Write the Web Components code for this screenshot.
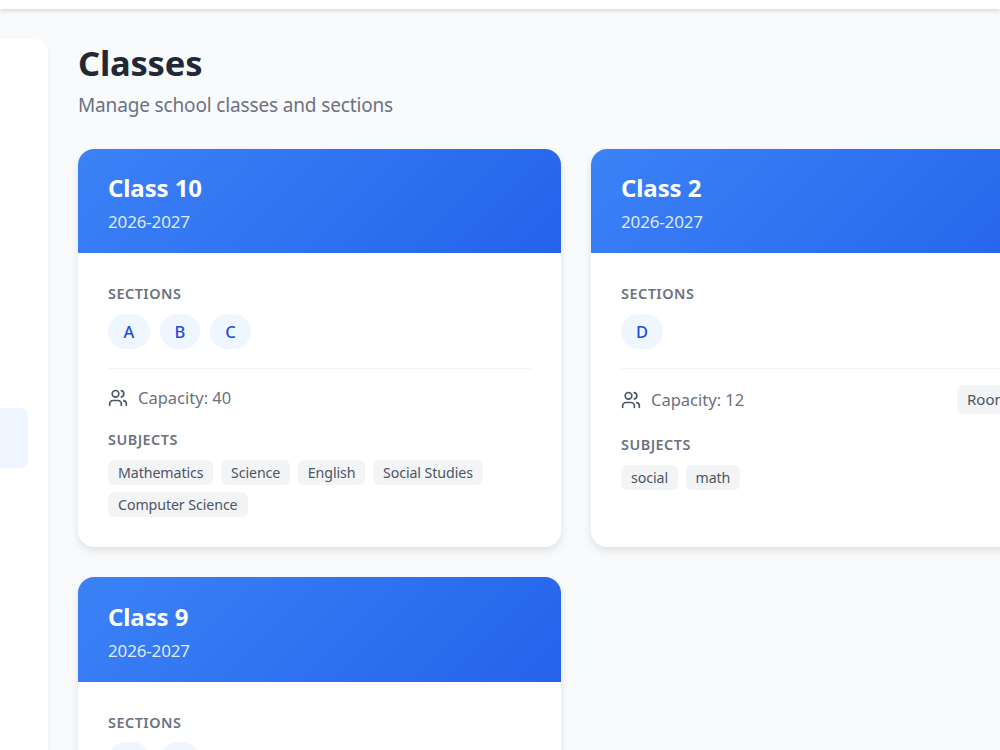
<!DOCTYPE html>
<html lang="en"><head><meta charset="utf-8"><title>Classes</title>
<style>
html,body{margin:0;height:750px;overflow:hidden}
body{font-family:"Noto Sans","Open Sans","Liberation Sans",sans-serif;background:#f9fafb;color:#1f2937}
</style></head><body>
<app-shell>
  <class-grid>
    <class-card name="Class 10" year="2026-2027" capacity="40">
      <section-pill slot="sections" style="--w:42px">A</section-pill><section-pill slot="sections" style="--w:40px">B</section-pill><section-pill slot="sections" style="--w:41px">C</section-pill>
      <subject-tag slot="subjects">Mathematics</subject-tag><subject-tag slot="subjects">Science</subject-tag><subject-tag slot="subjects">English</subject-tag><subject-tag slot="subjects">Social Studies</subject-tag><subject-tag slot="subjects">Computer Science</subject-tag>
    </class-card>
    <class-card name="Class 2" year="2026-2027" capacity="12" room="Room 101">
      <section-pill slot="sections" style="--w:42px">D</section-pill>
      <subject-tag slot="subjects">social</subject-tag><subject-tag slot="subjects">math</subject-tag>
    </class-card>
    <class-card name="Class 9" year="2026-2027">
      <section-pill slot="sections" style="--w:42px"></section-pill><section-pill slot="sections" style="--w:40px"></section-pill>
    </class-card>
  </class-grid>
</app-shell>
<script>
const def=(name,html,init)=>customElements.define(name,class extends HTMLElement{
  constructor(){super();this.attachShadow({mode:'open'}).innerHTML=html;}
  connectedCallback(){init&&init(this.shadowRoot,this);}
});
def('app-shell',`<style>
:host{display:flex;flex-direction:column;height:750px;overflow:hidden}
.top{flex:none;height:9px;background:#fff;box-shadow:0 2px 4px rgba(0,0,0,.14);position:relative;z-index:2}
.row{flex:1;display:flex;min-height:0}
.side{flex:none;width:48px;box-sizing:border-box;margin-top:30px;padding-top:369px;background:#fff;border-radius:0 12px 12px 0;box-shadow:0 4px 6px rgba(0,0,0,.06);height:800px}
.active{width:28px;height:60px;background:#eff6ff;border-radius:0 8px 8px 0}
main{flex:none;width:1200px;padding:30px 30px 0;box-sizing:border-box}
h1{margin:0;font-size:34.5px;line-height:48px;font-weight:700;color:#1f2937;letter-spacing:-.2px}
p{margin:5px 0 31.2px;font-size:19px;line-height:26px;color:#6b7280;letter-spacing:-.15px}
</style>
<div class="top"></div>
<div class="row"><div class="side"><div class="active"></div></div>
<main><h1>Classes</h1><p>Manage school classes and sections</p><slot></slot></main></div>`);
def('class-grid',`<style>:host{display:grid;grid-template-columns:483px 483px;gap:30px}</style><slot></slot>`);
def('class-card',`<style>
:host{display:block;background:#fff;border-radius:16px;box-shadow:0 4px 8px rgba(0,0,0,.1);overflow:hidden}
header{height:104.2px;box-sizing:border-box;padding:21.2px 30px 0;background:linear-gradient(135deg,#3b82f6,#2563eb);color:#fff}
h2{margin:0;font-size:24px;line-height:36px;font-weight:700;letter-spacing:-.1px}
.y{margin-top:3px;font-size:17px;line-height:26px;color:rgba(255,255,255,.85);letter-spacing:-.15px}
.b{padding:30px 30px 30.8px}
.l{font-size:14.4px;line-height:22.6px;font-weight:600;letter-spacing:.5px;text-transform:uppercase;color:#6b7280;margin-bottom:8px}
.s{display:flex;gap:10px;padding-bottom:19px;border-bottom:1px solid #f3f4f6;margin-bottom:16px}
.m{display:flex;justify-content:space-between;align-items:center;margin-bottom:20px;color:#4b5563}
.c{display:flex;align-items:center;gap:10px;box-sizing:border-box;height:24px;padding-top:2px;font-size:16.5px;line-height:22px;color:#6b7280}
svg{width:20px;height:20px;flex:none;fill:none;stroke:#4b5563;stroke-width:2;stroke-linecap:round;stroke-linejoin:round}
.r{width:87px;padding:0 10px;height:29px;line-height:29px;box-sizing:border-box;background:#f3f4f6;border-radius:6px;font-size:15px;color:#4b5563;white-space:nowrap}
.t{display:flex;flex-wrap:wrap;gap:7px 7.5px}
</style>
<header><h2 id="n"></h2><div class="y" id="y"></div></header>
<div class="b">
<div class="l">Sections</div><div class="s"><slot name="sections"></slot></div>
<div class="m" id="m"><div class="c"><svg viewBox="0 0 24 24"><path d="M16 21v-2a4 4 0 0 0-4-4H6a4 4 0 0 0-4 4v2"/><circle cx="9" cy="7" r="4"/><path d="M22 21v-2a4 4 0 0 0-3-3.87"/><path d="M16 3.13a4 4 0 0 1 0 7.75"/></svg><span id="c"></span></div><div class="r" id="r"></div></div>
<div id="sub"><div class="l">Subjects</div><div class="t"><slot name="subjects"></slot></div></div>
</div>`,(s,h)=>{
  s.getElementById('n').textContent=h.getAttribute('name');
  s.getElementById('y').textContent=h.getAttribute('year');
  if(h.hasAttribute('capacity'))s.getElementById('c').textContent='Capacity: '+h.getAttribute('capacity');
  else{s.getElementById('m').remove();s.getElementById('sub').remove();}
  const r=s.getElementById('r');
  if(r){if(h.getAttribute('room'))r.textContent=h.getAttribute('room');else r.remove();}
});
def('section-pill',`<style>:host{display:block;box-sizing:border-box;width:var(--w,42px);height:35px;line-height:35px;text-align:center;border-radius:18px;background:#eff6ff;color:#1d4ed8;font-size:16.5px;font-weight:500}</style><slot></slot>`);
def('subject-tag',`<style>:host{display:block;box-sizing:border-box;height:25px;line-height:25px;padding:0 10px;border-radius:6px;background:#f3f4f6;color:#4b5563;font-size:14.2px;letter-spacing:-.08px}</style><slot></slot>`);
</script></body></html>
